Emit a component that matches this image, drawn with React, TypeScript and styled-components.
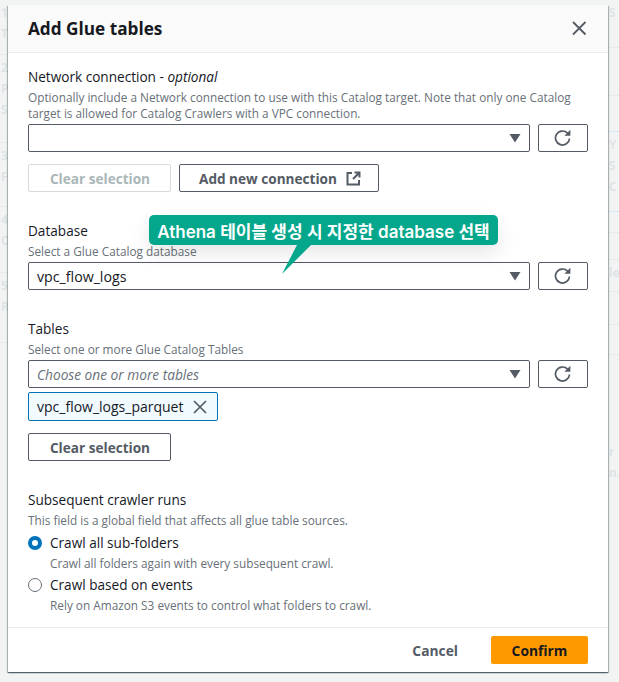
import React from "react";
import styled, { createGlobalStyle } from "styled-components";

const Global = createGlobalStyle`
  html, body {
    margin: 0;
    padding: 0;
    background: #f2f3f3;
  }
  * {
    box-sizing: border-box;
  }
`;

const Page = styled.div`
  position: relative;
  width: 619px;
  height: 682px;
  overflow: hidden;
  padding: 5px 11px 10px 8px;
  font-family: "Open Sans", "Noto Sans CJK KR", sans-serif;
  color: #16191f;
`;

// faint page content showing from behind the modal
const Ghost = styled.div<{ $side: "left" | "right" }>`
  position: absolute;
  top: 0;
  ${(p) => (p.$side === "left" ? "left: 0; width: 26px;" : "right: 0; width: 11px;")}
  font-size: 12px;
  line-height: 21px;
  font-weight: 700;
  color: #dfe3e4;
  white-space: nowrap;
  filter: blur(0.5px);
`;

const GhostRow = styled.div<{ $h: number; $line?: string }>`
  height: ${(p) => p.$h}px;
  padding: 2px 0 0 1px;
  border-bottom: 1px solid ${(p) => p.$line || "#e9ebeb"};
`;

const Modal = styled.div`
  position: relative;
  display: flex;
  flex-direction: column;
  height: 667px;
  background: #fff;
  box-shadow: 0 1px 1px 0 rgba(0, 28, 36, 0.4), 1px 1px 1px 0 rgba(0, 28, 36, 0.25), -1px 1px 1px 0 rgba(0, 28, 36, 0.25);
`;

const Header = styled.header`
  flex: none;
  display: flex;
  align-items: center;
  justify-content: space-between;
  height: 48px;
  padding: 0 20px;
  background: #fafafa;
  border-bottom: 1px solid #eaeded;
`;

const Title = styled.h2`
  margin: 0;
  font-size: 17.2px;
  font-weight: 700;
`;

const CloseIcon = styled.svg`
  width: 16px;
  height: 16px;
  stroke: #545b64;
  stroke-width: 1.8;
  fill: none;
`;

const Body = styled.div`
  flex: 1;
  padding: 14px 20px 0;
`;

const Section = styled.section`
  margin-bottom: 29px;
  &:last-child {
    margin-bottom: 0;
  }
`;

const Label = styled.div`
  font-size: 13.6px;
  line-height: 20px;
  margin-bottom: 2px;
`;

const Hint = styled.div`
  font-size: 11.8px;
  line-height: 16px;
  color: #687078;
  margin-bottom: 3px;
`;

const SelectRow = styled.div`
  display: flex;
  gap: 8px;
`;

const Select = styled.div`
  flex: 1;
  height: 28px;
  display: flex;
  align-items: center;
  justify-content: space-between;
  padding: 0 8px;
  border: 1px solid #545b64;
  border-radius: 2px;
  font-size: 14.2px;
`;

const Placeholder = styled.span`
  font-size: 13.7px;
  font-style: italic;
  color: #687078;
`;

const Caret = styled.svg`
  width: 12px;
  height: 12px;
  fill: #545b64;
`;

const IconButton = styled.div`
  width: 50px;
  height: 28px;
  display: flex;
  align-items: center;
  justify-content: center;
  border: 1px solid #545b64;
  border-radius: 2px;
`;

const RefreshIcon = styled.svg`
  width: 18px;
  height: 18px;
  stroke: #545b64;
  stroke-width: 1.7;
  fill: none;
`;

const Actions = styled.div`
  display: flex;
  gap: 8px;
  margin-top: 12px;
`;

const Button = styled.div<{ $disabled?: boolean }>`
  display: inline-flex;
  align-items: center;
  justify-content: center;
  gap: 9px;
  height: 28px;
  min-width: 143px;
  padding: 0 17px 0 19px;
  border: 1px solid ${(p) => (p.$disabled ? "#d5dbdb" : "#545b64")};
  border-radius: 2px;
  font-size: 13.6px;
  font-weight: 700;
  white-space: nowrap;
  color: ${(p) => (p.$disabled ? "#aab7b8" : "#545b64")};
  > span {
    margin-left: -1px;
  }
`;

const LinkIcon = styled.svg`
  width: 15px;
  height: 15px;
  stroke: #545b64;
  stroke-width: 2;
  fill: none;
`;

const ChipRow = styled.div`
  display: flex;
`;

const Chip = styled.div`
  display: inline-flex;
  align-items: center;
  gap: 10px;
  height: 29px;
  margin-top: 4px;
  padding: 0 10px 0 8px;
  background: #f1faff;
  border: 1px solid #0073bb;
  border-radius: 2px;
  font-size: 14px;
`;

const ChipX = styled.svg`
  width: 14px;
  height: 14px;
  stroke: #545b64;
  stroke-width: 1.7;
  fill: none;
`;

const ClearRow = styled.div`
  display: flex;
  margin-top: 12px;
`;

const RadioGroup = styled.div`
  padding-top: 1px;
`;

const RadioRow = styled.div`
  display: flex;
  gap: 8px;
  margin-top: 1px;
`;

const Radio = styled.span<{ $on?: boolean }>`
  width: 14px;
  height: 14px;
  margin-top: 3px;
  border-radius: 50%;
  flex: none;
  background: #fff;
  border: ${(p) => (p.$on ? "4px solid #0073bb" : "1px solid #687078")};
`;

const RadioText = styled.div`
  display: flex;
  flex-direction: column;
`;

const Footer = styled.footer`
  flex: none;
  display: flex;
  align-items: center;
  justify-content: flex-end;
  gap: 33px;
  height: 45px;
  padding: 0 20px;
  border-top: 1px solid #eaeded;
`;

const Cancel = styled.div`
  font-size: 13.8px;
  font-weight: 700;
  color: #545b64;
`;

const Confirm = styled.div`
  width: 97px;
  height: 28px;
  display: flex;
  align-items: center;
  justify-content: center;
  background: #ff9900;
  border-radius: 2px;
  font-size: 13.8px;
  font-weight: 700;
  color: #16191f;
`;

const Callout = styled.div`
  position: absolute;
  left: 141px;
  top: 210px;
  width: 349px;
  height: 30px;
  display: flex;
  align-items: center;
  justify-content: center;
  background: #04a78b;
  border-radius: 5px;
  color: #fff;
  font-family: Inter, "Noto Sans CJK KR", sans-serif;
  font-size: 17px;
  font-weight: 600;
  white-space: nowrap;
  box-shadow: 0 8px 20px rgba(0, 0, 0, 0.1);
`;

const CalloutTail = styled.svg`
  position: absolute;
  left: 126px;
  top: 28px;
  width: 40px;
  height: 34px;
  fill: #04a78b;
`;

const Refresh = () => (
  <IconButton>
    <RefreshIcon viewBox="0 0 18 18">
      <path d="M15.5 9.5A7 7 0 1 1 13.6 4.2" />
      <path d="M16.4 0.8v6h-6z" fill="#545b64" stroke="none" />
    </RefreshIcon>
  </IconButton>
);

const Arrow = () => (
  <Caret viewBox="0 0 12 12">
    <path d="M0.5 2h11L6 10.5z" />
  </Caret>
);

export default function App() {
  return (
    <>
      <Global />
      <Page>
        <Ghost $side="left">
          <GhostRow $h={55}>
            1<br />
            Trail
          </GhostRow>
          <GhostRow $h={88}>
            2<br />
            Post<br />
            Size
          </GhostRow>
          <GhostRow $h={64}>
            3<br />
            File
          </GhostRow>
          <GhostRow $h={66}>
            4<br />
            Out
          </GhostRow>
          <GhostRow $h={70}>
            5<br />
            Rev
          </GhostRow>
        </Ghost>
        <Ghost $side="right">
          <GhostRow $h={48}>S</GhostRow>
          <GhostRow $h={48} />
          <GhostRow $h={36} $line="#d9e6ee" />
          <GhostRow $h={80} $line="#d9e6ee">
            Y<br />
            S<br />
            C
          </GhostRow>
          <GhostRow $h={21} />
          <GhostRow $h={27} />
          <GhostRow $h={32}>le</GhostRow>
          <GhostRow $h={33} />
          <GhostRow $h={30} />
          <GhostRow $h={121}>
            <br />
            <br />
            <br />
            <br />
            r<br />
            n
          </GhostRow>
        </Ghost>
        <Modal>
          <Header>
            <Title>Add Glue tables</Title>
            <CloseIcon viewBox="0 0 16 16">
              <path d="M1 1l12.5 12.5M13.5 1L1 13.5" />
            </CloseIcon>
          </Header>
          <Body>
            <Section>
              <Label>
                Network connection - <em>optional</em>
              </Label>
              <Hint>
                Optionally include a Network connection to use with this Catalog target. Note that only one Catalog
                target is allowed for Catalog Crawlers with a VPC connection.
              </Hint>
              <SelectRow>
                <Select>
                  <span />
                  <Arrow />
                </Select>
                <Refresh />
              </SelectRow>
              <Actions>
                <Button $disabled>
                  <span>Clear selection</span>
                </Button>
                <Button>
                  Add new connection
                  <LinkIcon viewBox="0 0 15 15">
                    <path d="M6 2H1.5v11.5H13V9M8.5 1.5h5v5M13.5 1.5L7 8" />
                  </LinkIcon>
                </Button>
              </Actions>
            </Section>
            <Section>
              <Label>Database</Label>
              <Hint>Select a Glue Catalog database</Hint>
              <SelectRow>
                <Select>
                  vpc_flow_logs
                  <Arrow />
                </Select>
                <Refresh />
              </SelectRow>
            </Section>
            <Section>
              <Label>Tables</Label>
              <Hint>Select one or more Glue Catalog Tables</Hint>
              <SelectRow>
                <Select>
                  <Placeholder>Choose one or more tables</Placeholder>
                  <Arrow />
                </Select>
                <Refresh />
              </SelectRow>
              <ChipRow>
                <Chip>
                  vpc_flow_logs_parquet
                  <ChipX viewBox="0 0 14 14">
                    <path d="M1 1l12 12M13 1L1 13" />
                  </ChipX>
                </Chip>
              </ChipRow>
              <ClearRow>
                <Button>
                  <span>Clear selection</span>
                </Button>
              </ClearRow>
            </Section>
            <Section>
              <Label>Subsequent crawler runs</Label>
              <Hint>This field is a global field that affects all glue table sources.</Hint>
              <RadioGroup>
                <RadioRow>
                  <Radio $on />
                  <RadioText>
                    <Label>Crawl all sub-folders</Label>
                    <Hint>Crawl all folders again with every subsequent crawl.</Hint>
                  </RadioText>
                </RadioRow>
                <RadioRow>
                  <Radio />
                  <RadioText>
                    <Label>Crawl based on events</Label>
                    <Hint>Rely on Amazon S3 events to control what folders to crawl.</Hint>
                  </RadioText>
                </RadioRow>
              </RadioGroup>
            </Section>
          </Body>
          <Footer>
            <Cancel>Cancel</Cancel>
            <Confirm>Confirm</Confirm>
          </Footer>
          <Callout>
            Athena 테이블 생성 시 지정한 database 선택
            <CalloutTail viewBox="0 0 40 34">
              <path d="M22 2h14L7 31z" />
            </CalloutTail>
          </Callout>
        </Modal>
      </Page>
    </>
  );
}
